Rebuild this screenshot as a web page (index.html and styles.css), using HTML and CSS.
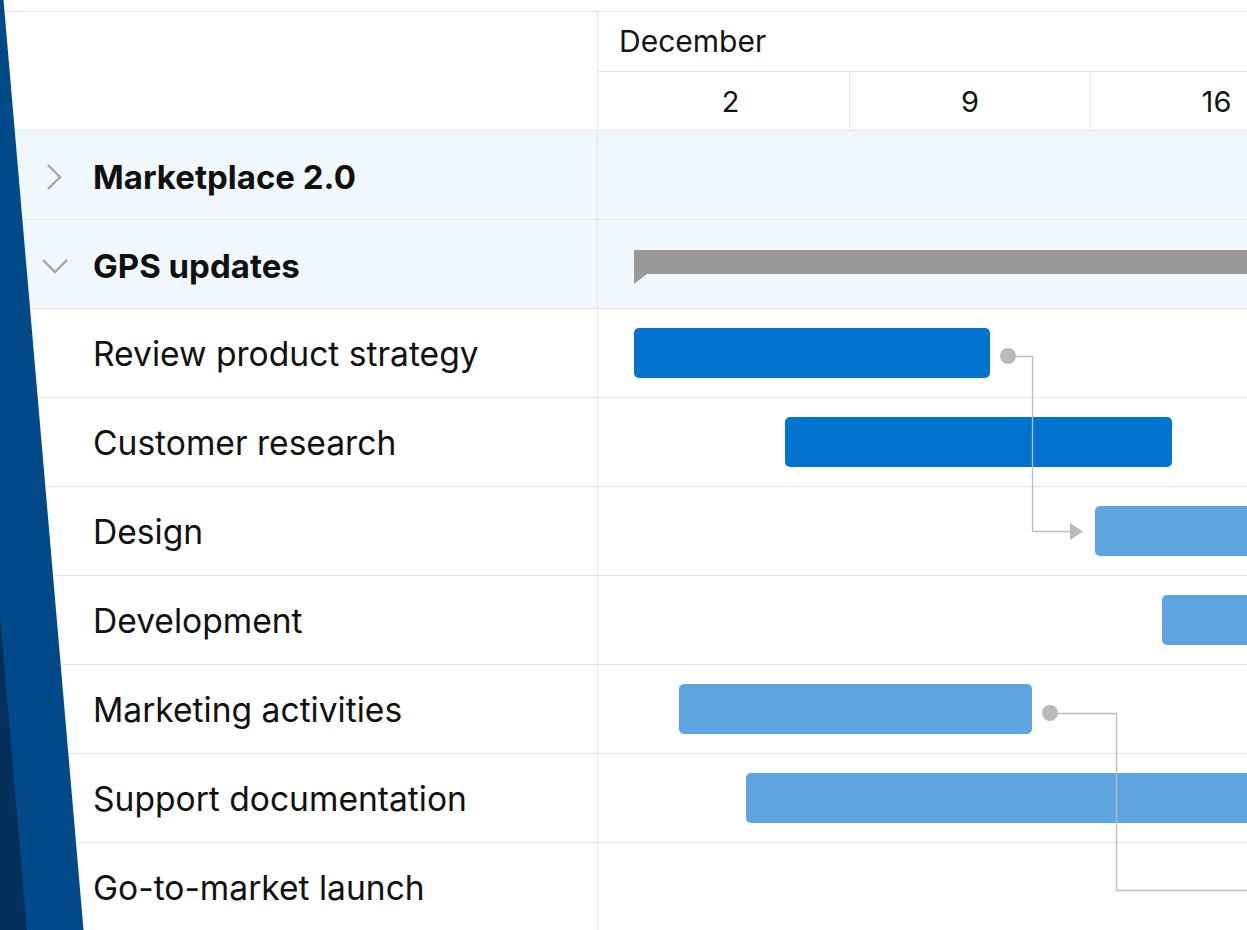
FILE: index.html
```html
<!DOCTYPE html>
<html lang="en">
<head>
<meta charset="utf-8">
<title>Project timeline</title>
<link rel="stylesheet" href="styles.css">
</head>
<body>
<div class="page">
  <div class="gantt">
    <div class="gantt-head">
      <div class="head-side"></div>
      <div class="head-scale">
        <div class="head-month">December</div>
        <div class="head-days">
          <div class="day day-first">2</div>
          <div class="day">9</div>
          <div class="day day-wide">16</div>
        </div>
      </div>
    </div>

    <div class="gantt-body">
      <div class="row row-group">
        <div class="cell-name">
          <span class="toggle">
            <svg viewBox="0 0 28 28" width="28" height="28"><path d="M7 2l12 12-12 12" fill="none" stroke="#a6a6a6" stroke-width="2.4"/></svg>
          </span>
          <span class="name">Marketplace 2.0</span>
        </div>
        <div class="cell-track"></div>
      </div>

      <div class="row row-group">
        <div class="cell-name">
          <span class="toggle">
            <svg viewBox="0 0 28 28" width="28" height="28"><path d="M2 8l12 12 12-12" fill="none" stroke="#a6a6a6" stroke-width="2.4"/></svg>
          </span>
          <span class="name">GPS updates</span>
        </div>
        <div class="cell-track">
          <div class="summary" style="left:36px;width:760px"></div>
        </div>
      </div>

      <div class="row">
        <div class="cell-name"><span class="name">Review product strategy</span></div>
        <div class="cell-track"><div class="bar bar-done" style="left:36px;width:356px"></div></div>
      </div>

      <div class="row">
        <div class="cell-name"><span class="name">Customer research</span></div>
        <div class="cell-track"><div class="bar bar-done" style="left:187px;width:387px"></div></div>
      </div>

      <div class="row">
        <div class="cell-name"><span class="name">Design</span></div>
        <div class="cell-track"><div class="bar" style="left:497px;width:300px"></div></div>
      </div>

      <div class="row">
        <div class="cell-name"><span class="name">Development</span></div>
        <div class="cell-track"><div class="bar" style="left:564px;width:300px"></div></div>
      </div>

      <div class="row">
        <div class="cell-name"><span class="name">Marketing activities</span></div>
        <div class="cell-track"><div class="bar" style="left:81px;width:353px"></div></div>
      </div>

      <div class="row">
        <div class="cell-name"><span class="name">Support documentation</span></div>
        <div class="cell-track"><div class="bar" style="left:148px;width:640px"></div></div>
      </div>

      <div class="row">
        <div class="cell-name"><span class="name">Go-to-market launch</span></div>
        <div class="cell-track"></div>
      </div>

      <!-- finish-to-start dependency links, drawn over the timeline -->
      <svg class="links" width="660" height="800" viewBox="0 0 660 800">
        <circle cx="410" cy="225" r="8" fill="#bababa"/>
        <path d="M418 225.5H434.5V400.5H472" fill="none" stroke="#bdbdbd" stroke-width="1.3"/>
        <path d="M472 392L485 400.5 472 409Z" fill="#bababa"/>
        <circle cx="452" cy="582" r="8" fill="#bababa"/>
        <path d="M460 582.5H518.5V759.5H660" fill="none" stroke="#bdbdbd" stroke-width="1.3"/>
      </svg>
    </div>
  </div>

  <!-- decorative brand stripes along the left edge -->
  <div class="stripe stripe-blue"></div>
  <div class="stripe stripe-navy"></div>
</div>
</body>
</html>
```

FILE: styles.css
```css
* {
  box-sizing: border-box;
}

html, body {
  margin: 0;
  padding: 0;
  background: #ffffff;
}

body {
  font-family: Inter, "Noto Sans", "Liberation Sans", sans-serif;
  color: #111111;
}

.page {
  position: relative;
  width: 1247px;
  height: 930px;
  overflow: hidden;
  padding-top: 11px;
}

.gantt {
  border-top: 1px solid #e6e6e6;
  width: 1400px;
}

/* header */
.gantt-head {
  display: grid;
  grid-template-columns: 598px 1fr;
  border-bottom: 1px solid #e6e6e6;
}

.head-side {
  border-right: 1px solid #e6e6e6;
}

.head-month {
  height: 60px;
  border-bottom: 1px solid #e6e6e6;
  padding-left: 21px;
  padding-bottom: 2px;
  display: flex;
  align-items: center;
  font-size: 30px;
  color: #141414;
}

.head-days {
  display: flex;
  height: 58px;
}

.day {
  width: 241px;
  flex: none;
  display: flex;
  align-items: center;
  justify-content: center;
  font-size: 29px;
  color: #141414;
  border-right: 1px solid #e6e6e6;
}

.day-first {
  width: 252px;
  padding-left: 14px;
}

.day-wide {
  width: 252px;
}

/* rows */
.gantt-body {
  position: relative;
}

.row {
  display: grid;
  grid-template-columns: 598px 1fr;
  height: 89px;
  border-bottom: 1px solid #e6e6e6;
}

.row-group {
  background: #f1f8fd;
}

.row-group .cell-name {
  font-size: 33px;
  padding-top: 3px;
}

.row-group .name {
  font-weight: 700;
}

.cell-name {
  border-right: 1px solid #e6e6e6;
  display: flex;
  align-items: center;
  padding-left: 93px;
  position: relative;
  font-size: 33.6px;
}

.toggle {
  position: absolute;
  left: 41px;
  top: 50%;
  width: 28px;
  height: 28px;
  margin-top: -12px;
  display: flex;
}

.name {
  white-space: nowrap;
}

.cell-track {
  position: relative;
}

.bar {
  position: absolute;
  top: 19px;
  height: 50px;
  border-radius: 5px;
  background: #5ea5df;
}

.bar-done {
  background: #0273cf;
}

.summary {
  position: absolute;
  top: 30px;
  height: 24px;
  background: #999999;
}

.summary::after {
  content: "";
  position: absolute;
  left: 0;
  top: 24px;
  width: 13px;
  height: 10px;
  background: #999999;
  clip-path: polygon(0 0, 100% 0, 0 100%);
}

.links {
  position: absolute;
  left: 598px;
  top: 0;
  pointer-events: none;
}

.stripe {
  position: absolute;
  left: 0;
  top: 0;
  width: 90px;
  height: 930px;
}

.stripe-blue {
  background: #02498a;
  clip-path: polygon(0 0, 3.5px 0, 83.5px 930px, 0 930px);
}

.stripe-navy {
  background: #03305a;
  clip-path: polygon(0 616px, 27px 930px, 0 930px);
}
```
